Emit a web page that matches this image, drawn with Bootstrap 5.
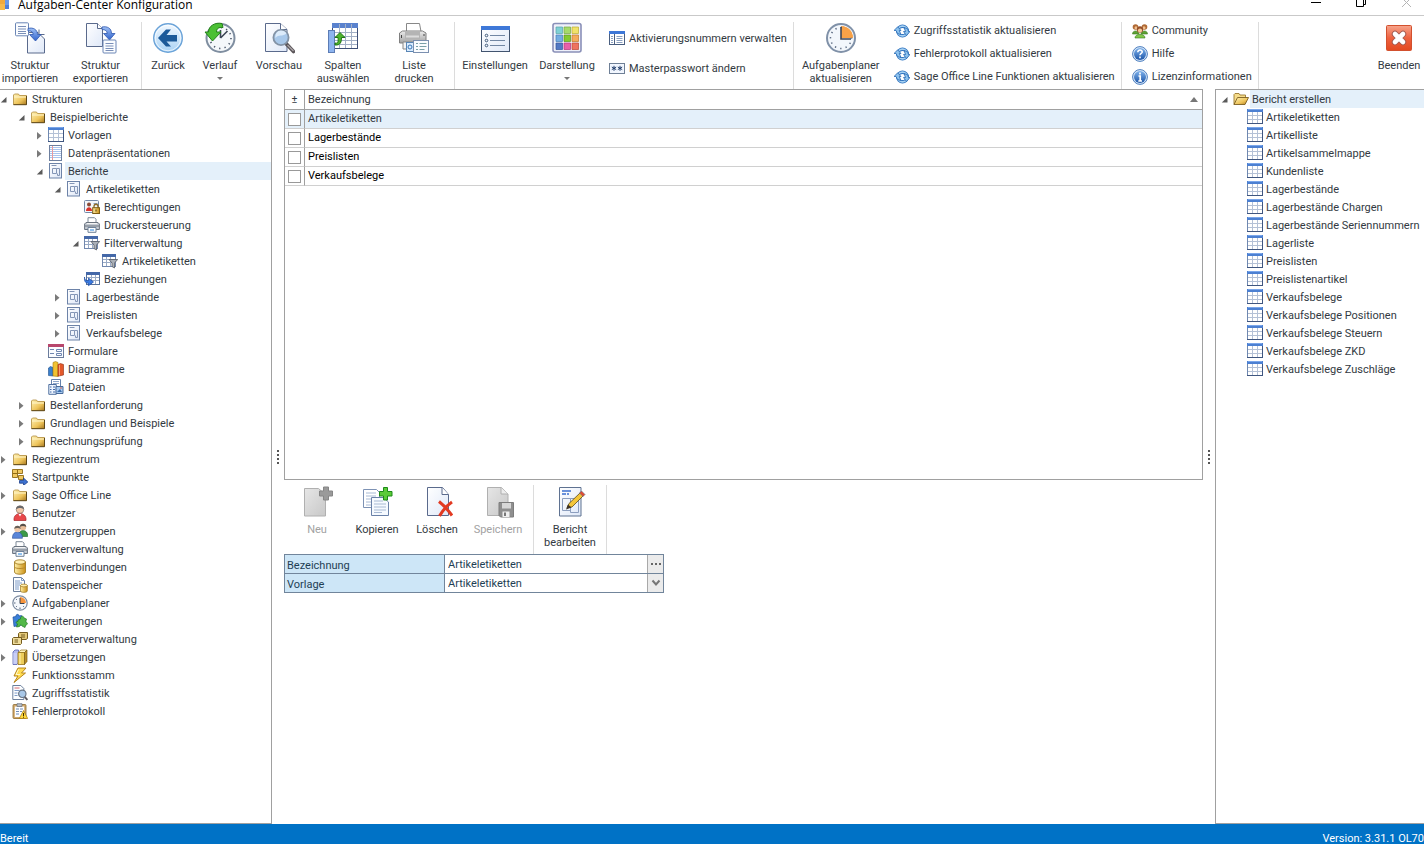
<!DOCTYPE html>
<html lang="de">
<head>
<meta charset="utf-8">
<meta name="viewport" content="width=device-width, initial-scale=1">
<title>Aufgaben-Center Konfiguration</title>
<link href="https://cdn.jsdelivr.net/npm/bootstrap@5.3.0/dist/css/bootstrap.min.css" rel="stylesheet">
<style>
body{font-family:Roboto,"DejaVu Sans Condensed",sans-serif;font-size:11px;line-height:13px;color:#333a42;background:#fff}
svg{display:block;flex:none}
button,input,select{font:inherit;color:inherit}
a{color:inherit;text-decoration:none}
.titlebar{height:16px;border-bottom:1px solid #c9c9c9;font-family:"Open Sans",sans-serif;font-size:12px;line-height:9px;color:#000}
.titlebar h1{font:inherit}
.winbtn{width:46px;height:15px;padding:0;border:0;background:none}
.ribbon{height:73px}
.rgroup{border-right:1px solid #dcdcdc;margin-top:6px}
.bigbtn{border:0;background:none;padding:0;display:flex;flex-direction:column;align-items:center;text-align:center;width:60px}
.bigbtn svg{margin-bottom:5px}
.bigbtn:disabled{color:#a2a2a2}
.b50{width:50px}.b52{width:52px}.b62{width:62px}.b64{width:64px}.b66{width:66px}.b80{width:80px}.b81{width:81px}.b94{width:94px}
.caret{width:0;height:0;border:3px solid transparent;border-top-color:#777;margin-top:5px;border-bottom:0}
.smallbtn{border:0;background:none;padding:0;display:flex;align-items:center;gap:4px;height:23px;text-align:left;white-space:nowrap}
.pair .smallbtn{height:30px}
.trio{margin-top:-3px;padding:0 6px}
.pair{margin-top:1px;padding:0 6px 0 10px}
.trio.wide{padding-left:10px}
.line{border:1px solid #a0a0a0}
.leftpane{width:272px;border-left:0}
.rightpane{width:209px;border-right:0;padding-left:5px}
.tree,.tree ul{list-style:none;margin:0;padding:0}
.tree ul{padding-left:18px}
.rightpane .tree ul{padding-left:14px}
.rightpane .node a{padding-left:2px}
.node{display:flex;align-items:center;height:18px;white-space:nowrap}
.tw{width:12px;height:18px;padding:0;border:0;background:none;flex:none}
.node a{flex:1;line-height:17px;padding:1px 0 0 3px;margin-left:1px}
.node.sel a{background:#e4f0fa}
.splitter{width:12px;gap:2px}
.splitter i{width:2px;height:2px;background:#555}
.work{display:grid;grid-template-rows:391fr 344fr}
.grid{width:100%;color:#000;border-collapse:separate;border-spacing:0}
.grid th,.grid td{font-weight:400;padding:0 3px;height:19px;line-height:18px;border-bottom:1px solid #d0d0d0}
.grid thead th{height:20px;border-color:#a0a0a0;color:#333a42}
.grid th:first-child,.grid td:first-child{width:20px;border-right:1px solid #a0a0a0;text-align:center}
.grid tr.sel td{background:#e4f0fa;color:#333a42}
.grid input{appearance:none;width:13px;height:13px;border:1px solid #999;background:#fff;display:block;margin:0}
.tools{padding:5px 0 0 3px}
.tools .tgroup{height:69px;border-right:1px solid #dcdcdc}
.tools .bigbtn{padding-top:1px}
.props{width:380px;border:1px solid #71859b;color:#1f3f55}
.prow{height:18px}
.prow + .prow{height:19px;border-top:1px solid #71859b}
.prow label{width:160px;background:#cde6f7;border-right:1px solid #71859b;padding:2px 2px 0;line-height:17px}
.prow input,.prow select{appearance:none;border:0;padding:0 3px;background:#fff;flex:1;min-width:0;outline:0}
.prow .pbtn{width:16px;border:0;border-left:1px solid #a9a9a9;background:#ebebeb;padding:0;display:flex;align-items:center;justify-content:center}
.status{height:20px;background:#0072c6;color:#fff;line-height:11px}
</style>
</head>
<body class="vh-100 d-flex flex-column overflow-hidden">

<svg width="0" height="0" class="position-absolute" aria-hidden="true">
<defs>
<linearGradient id="gPage" x1="0" y1="0" x2="1" y2="1"><stop offset="0" stop-color="#fff"/><stop offset="1" stop-color="#dfe8f8"/></linearGradient>
<linearGradient id="gGray" x1="0" y1="0" x2="1" y2="1"><stop offset="0" stop-color="#e6e6e6"/><stop offset="1" stop-color="#c8c8c8"/></linearGradient>
<linearGradient id="gFold" x1="0" y1="0" x2="1" y2="1"><stop offset="0" stop-color="#fff3b8"/><stop offset=".6" stop-color="#eec45a"/><stop offset="1" stop-color="#a87820"/></linearGradient>
<linearGradient id="gBlue" x1="0" y1="0" x2="0" y2="1"><stop offset="0" stop-color="#f3f9ff"/><stop offset="1" stop-color="#a8d2f5"/></linearGradient>
<linearGradient id="gBall" x1="0" y1="0" x2="0" y2="1"><stop offset="0" stop-color="#7fb2ec"/><stop offset="1" stop-color="#1c55a8"/></linearGradient>
<linearGradient id="gRed" x1="0" y1="0" x2="0" y2="1"><stop offset="0" stop-color="#f7a58c"/><stop offset=".5" stop-color="#ee6240"/><stop offset="1" stop-color="#e34a20"/></linearGradient>
<linearGradient id="gArr" x1="0" y1="0" x2="0" y2="1"><stop offset="0" stop-color="#9fc0f5"/><stop offset="1" stop-color="#2f62cc"/></linearGradient>
<linearGradient id="gGold" x1="0" y1="0" x2="1" y2="0"><stop offset="0" stop-color="#fff0a8"/><stop offset="1" stop-color="#c98f16"/></linearGradient>
<linearGradient id="gMetal" x1="0" y1="0" x2="0" y2="1"><stop offset="0" stop-color="#ececec"/><stop offset="1" stop-color="#a2a2a2"/></linearGradient>

<symbol id="open" viewBox="0 0 12 18"><path d="M6.500 7v5.500H.8z" fill="#5a5a5a"/></symbol>
<symbol id="shut" viewBox="0 0 12 18"><path d="M1 6l4.500 3.700L1 13.400z" fill="#7a7a7a"/></symbol>

<symbol id="import" viewBox="0 0 32 32"><path d="M13.500 10.500H24l6.500 6.500v14h-17z" fill="url(#gPage)" stroke="#5a6a8c"/><path d="M25 7.500v5h5.500" fill="#fff" stroke="#5a6a8c"/><rect x="1.500" y=".8" width="13" height="13" rx="1" fill="#fbfdff" stroke="#6a85b5"/><path d="M4 4.500h8M4 7h8M4 9.500h8M4 11.500h8" stroke="#7a8fb8"/><path d="M14 6.500c5-1.500 9.500 1 9.500 6H27l-5.500 6.500-6-6.500h3.700c0-2.500-2-4-5.200-3.500z" fill="url(#gArr)" stroke="#2c55ae" stroke-width=".8"/></symbol>
<symbol id="export" viewBox="0 0 32 32"><path d="M1.500 1.500h11l5 5v18h-16z" fill="url(#gPage)" stroke="#5a6a8c"/><path d="M12.500 1.500v5h5" fill="#fff" stroke="#5a6a8c"/><path d="M17 5c5-1 9.500 1 9.500 6.500H30L24.500 18l-6-6.500h3.700c0-2.500-2-4-5.200-4z" fill="url(#gArr)" stroke="#2c55ae" stroke-width=".8"/><rect x="18" y="18" width="13" height="13" rx="1" fill="#fbfdff" stroke="#6a85b5"/><path d="M20.500 21.500h8M20.500 24h8M20.500 26.500h8M20.500 28.500h8" stroke="#7a8fb8"/></symbol>
<symbol id="back" viewBox="0 0 32 32"><circle cx="16" cy="16" r="14.300" fill="url(#gBlue)" stroke="#6ba3d8" stroke-width="1.400"/><circle cx="16" cy="16" r="12.800" fill="none" stroke="#fff" opacity=".7"/><path d="M6 16l8-8.500h5L14.500 13H25v6.500H14.500L19 24.500h-5z" fill="#1c5a99"/></symbol>
<symbol id="history" viewBox="0 0 32 32"><circle cx="16.500" cy="16" r="14" fill="#f5f8fb" stroke="#7f8ea0" stroke-width="2"/><circle cx="16.500" cy="16" r="10.500" fill="none" stroke="#4a5668" stroke-width="1.600" stroke-dasharray="1.300 4.198"/><path d="M16.500 16l7-7M16.500 16V8" stroke="#3c4656" stroke-width="1.600"/><path d="M18 1.500C11 0 4.500 4 4.500 10H1l7.500 9 8.500-9h-4.500C12.500 6.500 14.500 5 19 5.500z" fill="#4cc034" stroke="#23801a"/></symbol>
<symbol id="preview" viewBox="0 0 32 32"><path d="M2.500 1.500h15l6.500 6v22h-21.500z" fill="url(#gPage)" stroke="#5a6a8c"/><path d="M17.500 1.500v6H24" fill="#fff" stroke="#5a6a8c"/><path d="M23.500 22l7 7.500" stroke="#5a5458" stroke-width="3.600" stroke-linecap="round"/><path d="M24.500 23l6 6" stroke="#aaa5a8" stroke-width="1.300"/><circle cx="18" cy="15.500" r="7.600" fill="#a8c8ea" stroke="#8292a5" stroke-width="1.800"/><path d="M12.500 16c3-4 7-1 11-4.500-1-2-3-3-5.500-3-4 0-6 3.500-5.500 7.500z" fill="#dcebfa"/></symbol>
<symbol id="columns" viewBox="0 0 32 32"><rect x="5.500" y="1.500" width="25" height="25" fill="#fff" stroke="#3f4f76"/><path d="M5 1h26v5H5z" fill="#5a82ce"/><path d="M6 10.500h24M6 14.500h24M6 18.500h24M6 22.500h24M12.500 2v24M18.500 2v24M24.500 2v24" stroke="#a3b0c6"/><rect x="1.500" y="8.500" width="6" height="22" fill="#8db4ef" stroke="#5c7cb5"/><path d="M8 21c4 1 3-3 3-5.500H8l5-5 5 5h-3.500c0 4.500-1 8-6.500 7.500z" fill="#4db32c" stroke="#217515"/></symbol>
<symbol id="printlist" viewBox="0 0 32 32"><path d="M8.500 9.500V1.500h13l1.500 8" fill="#fff" stroke="#888"/><path d="M1.500 11l3-2h20l3.500 2v10H1.500z" fill="url(#gMetal)" stroke="#808080"/><path d="M7 9.500h15v8H7z" fill="#b4b4b4"/><path d="M8 14.500h13" stroke="#dcdcdc" stroke-width="2"/><path d="M3.500 13v3M26 12v2" stroke="#444"/><path d="M5 20h10v7H5z" fill="#f4f4f4" stroke="#888"/><rect x="8.500" y="20.500" width="8" height="9" fill="#d8ebff" stroke="#5a86b5"/><circle cx="12" cy="25" r="2" fill="none" stroke="#3a76b5"/><rect x="15.500" y="18.500" width="15" height="12" fill="#fafcff" stroke="#7b90b0"/><path d="M18 21.500h2M18 24.500h2M18 27.500h2M21.500 21.500h7M21.500 24.500h7M21.500 27.500h5" stroke="#7aa0a8"/></symbol>
<symbol id="settings" viewBox="0 0 32 32"><rect x="2.500" y="4.500" width="28" height="25" fill="url(#gPage)" stroke="#42546f"/><path d="M2 4h29v4H2z" fill="#3e78d8"/><g fill="none" stroke="#3e5878"><circle cx="7.500" cy="13.500" r="1.300"/><circle cx="7.500" cy="18.500" r="1.300"/><circle cx="7.500" cy="23.500" r="1.300"/><path d="M11 13.500h15M11 18.500h15M11 23.500h15" stroke="#7186a3"/></g></symbol>
<symbol id="theme" viewBox="0 0 32 32"><rect x="2" y="1.500" width="28" height="28.500" rx="2" fill="#eef0fa" stroke="#8a90b8" stroke-width="1.600"/><g stroke-width=".7"><path d="M5 5h6.500v6.500H5z" fill="#7fd0d4" stroke="#58a5a9"/><path d="M13 5h6.500v6.500H13z" fill="#a6da6a" stroke="#77a93e"/><path d="M21 5h6.500v6.500H21z" fill="#f0e26a" stroke="#bdae2e"/><path d="M5 13h6.500v6.500H5z" fill="#74ace2" stroke="#4680b8"/><path d="M13 13h6.500v6.500H13z" fill="#84ca30" stroke="#5c9418"/><path d="M21 13h6.500v6.500H21z" fill="#f4ac5c" stroke="#c07828"/><path d="M5 21h6.500v6.500H5z" fill="#5278c4" stroke="#34549a"/><path d="M13 21h6.500v6.500H13z" fill="#e860a8" stroke="#b83478"/><path d="M21 21h6.500v6.500H21z" fill="#ee7460" stroke="#bc4834"/></g></symbol>
<symbol id="clockbig" viewBox="0 0 32 32"><circle cx="16" cy="16" r="14" fill="#f3f7fc" stroke="#8091a8" stroke-width="2"/><path d="M16 16V4A12 12 0 0 1 28 16z" fill="#f8a248"/><circle cx="16" cy="16" r="10.500" fill="none" stroke="#53627a" stroke-width="1.500" stroke-dasharray="1.300 4.198" stroke-dashoffset=".6"/><path d="M18 14V4.200A12 12 0 0 1 27.800 14z" fill="#f8a248"/><path d="M16 5v12h10" fill="none" stroke="#3e4757" stroke-width="1.600"/></symbol>
<symbol id="exit" viewBox="0 0 32 32"><rect x="3.500" y="3.500" width="25" height="25" rx="1" fill="url(#gRed)" stroke="#d2502e"/><path d="M12 12l8 8M20 12l-8 8" stroke="#a05a50" stroke-width="6.400" stroke-linecap="round"/><path d="M12 12l8 8M20 12l-8 8" stroke="#fff" stroke-width="4.600" stroke-linecap="round"/></symbol>

<symbol id="activation" viewBox="0 0 16 16"><rect x=".5" y="1.500" width="15" height="13" fill="#fff" stroke="#4a5f80"/><path d="M0 1h16v3H0z" fill="#3e78d8"/><path d="M5.500 4v10" stroke="#4a5f80"/><path d="M2 6.500h2M2 8.500h2M2 10.500h2M2 12.500h2M7.500 6.500h6M7.500 8.500h6M7.500 10.500h6M7.500 12.500h6" stroke="#8ba0c0"/></symbol>
<symbol id="password" viewBox="0 0 16 16"><rect x=".5" y="3.500" width="15" height="10" fill="#f2f7ff" stroke="#6e7f96"/><path d="M5 5.800v5M2.800 7l4.400 2.600M7.200 7L2.800 9.600M11 5.800v5M8.800 7l4.400 2.600M13.200 7L8.800 9.600" stroke="#24406e"/></symbol>
<symbol id="refresh" viewBox="0 0 16 16"><circle cx="8.500" cy="8" r="4.800" fill="none" stroke="#2f74c0" stroke-width="3.400"/><circle cx="8.500" cy="8" r="4.800" fill="none" stroke="#a5d0f2" stroke-width="1.700"/><path d="M0 7.500L3.700 3.800 7 7.500H5.300L7 11.500 3.500 10.500 2 7.500zM16 8.500l-3.500 4L9.500 8.500h2L10 4.500l3.500 1.200 1 2.800z" fill="#8cc2ee" stroke="#2a6ab4" stroke-width=".8"/></symbol>
<symbol id="community" viewBox="0 0 16 16"><path d="M.5 11c0-4 6-4 6.500 0zM9 11c.5-4 6.500-4 6.500 0z" fill="#5da233" stroke="#3c7a1f" stroke-width=".6"/><circle cx="3.500" cy="4" r="2.800" fill="#b06a35"/><circle cx="12.500" cy="4" r="2.800" fill="#b06a35"/><circle cx="4" cy="4.800" r="1.500" fill="#f2c08c"/><circle cx="12" cy="4.800" r="1.500" fill="#f2c08c"/><path d="M3 15c0-5 10-5 10 0z" fill="#7fc749" stroke="#3c7a1f" stroke-width=".6"/><circle cx="8" cy="6.500" r="3.200" fill="#96502a"/><circle cx="8" cy="7.500" r="2.100" fill="#f5c896"/></symbol>
<symbol id="help" viewBox="0 0 16 16"><circle cx="8" cy="8" r="7.400" fill="#dbe9f8" stroke="#3a70b8" stroke-width=".9"/><circle cx="8" cy="8" r="6" fill="url(#gBall)"/><path d="M5.800 6.200c0-3 4.600-2.700 4.400-.2C10.100 7.500 8 7.500 8 9.300M8 10.600v1.700" fill="none" stroke="#fff" stroke-width="1.600"/></symbol>
<symbol id="info" viewBox="0 0 16 16"><circle cx="8" cy="8" r="7.400" fill="#dbe9f8" stroke="#3a70b8" stroke-width=".9"/><circle cx="8" cy="8" r="6" fill="url(#gBall)"/><path d="M6.500 7h1.700v4.800M6.300 12h3.700M8 3.500v2" fill="none" stroke="#fff" stroke-width="1.700"/></symbol>

<symbol id="folder" viewBox="0 0 16 16"><path d="M1.500 13.500V4l1-1h4l1 1.500h7v9z" fill="url(#gFold)" stroke="#b08c3c" stroke-width=".8"/><path d="M2 6h12" stroke="#fff6cc"/><path d="M1.500 13.700h13V5" fill="none" stroke="#5d4718"/></symbol>
<symbol id="folderopen" viewBox="0 0 16 16"><path d="M1 13.500V3.500l1-1h4L7 4h5.500v3" fill="#f6dc8a" stroke="#9a7830" stroke-width=".9"/><path d="M1 13.500l3.500-7h11L12 13.500z" fill="url(#gFold)" stroke="#7d5f20" stroke-width=".9"/></symbol>
<symbol id="table" viewBox="0 0 16 16"><rect x=".5" y=".5" width="15" height="14" fill="#fff" stroke="#6f88b0"/><path d="M0 0h16v3H0z" fill="#4c80d2"/><path d="M1 .5h14" stroke="#7aa6ea"/><path d="M1 6.500h14M1 10.500h14M5.500 3v11M10.500 3v11" stroke="#b4c1d6"/><path d="M0 14.500h16M15.500 3v11" stroke="#3f5680"/></symbol>
<symbol id="list" viewBox="0 0 16 16"><rect x="1.500" y=".5" width="12" height="15" fill="#fff" stroke="#6d7f9f"/><path d="M2 2.500h11M2 4.500h11M2 6.500h11M2 8.500h11M2 10.500h11M2 12.500h11" stroke="#a9c4ee"/><path d="M4.500 1v14" stroke="#e8999e"/></symbol>
<symbol id="report" viewBox="0 0 16 16"><rect x="1.500" y=".5" width="12" height="14.500" fill="url(#gPage)" stroke="#6d83a8"/><path d="M3.500 2.500h5M4.500 5.500h4v5h-4zM8.500 5.500h3v7h-2v-2" fill="none" stroke="#8496b6"/></symbol>
<symbol id="rights" viewBox="0 0 16 16"><rect x=".5" y="1.500" width="14" height="12" rx="1" fill="#f4f7fb" stroke="#7488a8"/><circle cx="5" cy="5.500" r="2" fill="#8a4a38"/><path d="M2 12c0-5 6-5 6 0z" fill="#d8332c"/><path d="M9.500 4.500h4" stroke="#8aa0c0"/><path d="M10 9V7.500c0-3 4-3 4 0V9" fill="none" stroke="#8c6c28" stroke-width="1.300"/><rect x="8.700" y="8.700" width="6.800" height="5.800" fill="url(#gGold)" stroke="#7d5c14"/><path d="M12 10.500v2" stroke="#4d3808"/></symbol>
<symbol id="printer" viewBox="0 0 16 16"><path d="M4 6V.7h6.500L12 2.200V6" fill="#fff" stroke="#7d8896"/><path d="M.6 7L2 5.500h12L15.400 7v5.500H.6z" fill="#c4cad2" stroke="#6b7480"/><path d="M1 9h14" stroke="#6b7480"/><path d="M3 6.500h10" stroke="#f4f4f4"/><path d="M4 10.500h8v4.800H4z" fill="#fafdff" stroke="#6f8198"/><path d="M6 12h4v2H6z" fill="#8fc0ee"/></symbol>
<symbol id="filter" viewBox="0 0 16 16"><rect x=".5" y="1.500" width="13" height="12" fill="#fff" stroke="#7288ae"/><path d="M0 1h14v3H0z" fill="#4468a8"/><path d="M1 6.500h12M1 9.500h12M4.500 4v9M8.500 4v9" stroke="#9aabc6"/><path d="M7 6.500h8.700L12.500 10v5L10 13.500V10z" fill="#aab0b8" stroke="#555c66" stroke-width=".8"/></symbol>
<symbol id="relation" viewBox="0 0 16 16"><rect x="2.500" y="1.500" width="13" height="12" fill="#fff" stroke="#56719c"/><path d="M2 1h14v3H2z" fill="#4468a8"/><path d="M3 6.500h12M3 9.500h12M7.500 4v9M11.500 4v9" stroke="#9aabc6"/><path d="M.5 6c0 3 1.500 4 4 3.500V7l5 4-5 3.700v-2.500C1.500 12.500 0 10 .5 6z" fill="#3a7ae0" stroke="#1d4ba0" stroke-width=".7"/></symbol>
<symbol id="form" viewBox="0 0 16 16"><rect x=".5" y="1.500" width="15" height="13" fill="#fbfcff" stroke="#6b7c9c"/><path d="M0 1h16v3H0z" fill="#b8476c"/><path d="M2 6.500h4M2 10.500h4M8.500 6.500h5v2h-5zM8.500 10.500h5v2h-5z" fill="none" stroke="#6f86b0"/></symbol>
<symbol id="chart" viewBox="0 0 16 16"><path d="M.5 7l2-1.500L5 6.500V15l-4.500-.5z" fill="#3a80cc" stroke="#1e4f8c" stroke-width=".6"/><path d="M5 1.500L7.500.5l2.500 1v14l-5-.5z" fill="#f1c232" stroke="#a57c10" stroke-width=".6"/><path d="M10 3.500l2.500-1 3 1V14l-5.500 1.200z" fill="#e4582a" stroke="#8f2c10" stroke-width=".6"/><path d="M11.500 4v10.500" stroke="#f8a070"/></symbol>
<symbol id="files" viewBox="0 0 16 16"><path d="M3.500.5h9v11h-9z" fill="#fff" stroke="#6682ac"/><path d="M5 2.500h6M5 4.500h6" stroke="#8fa8cc"/><path d="M.8 5.500h7.500v9.800H.8z" fill="#eef5ff" stroke="#4e6e9e"/><path d="M2 8h1.500M5 8h2M2 10.500h1.500M5 10.500h2M2 13h1.500M5 13h2" stroke="#3f68a8" stroke-width="1.200"/><path d="M8 7.500h7v7H8z" fill="#a9cbf0" stroke="#486a9a"/><path d="M9 13l3-3 2 3z" fill="#3e6fae"/><path d="M12 9h2" stroke="#d8604a"/></symbol>
<symbol id="start" viewBox="0 0 16 16"><path d="M.5.5h5v4h-5zM5.500.5h5v4h-5zM.5 4.500h5v4h-5zM6.500 6.500h5v4h-5z" fill="#f0c860" stroke="#8f6a14" stroke-width=".9"/><path d="M7.500 11.500h4V9l4.300 4-4.300 3.500v-2.300h-4z" fill="#3e72d0" stroke="#1c3f8a" stroke-width=".8"/></symbol>
<symbol id="user" viewBox="0 0 16 16"><path d="M2 15.500c-.5-5 3-7 6-7s6.500 2 6 7z" fill="#e8474a" stroke="#a82428" stroke-width=".7"/><circle cx="8" cy="4.500" r="3.800" fill="#f0c8a8" stroke="#7a6458" stroke-width=".6"/><path d="M4 4.500C3.500-.5 12.500-.5 12 4.500 10 2.500 6 2.500 4 4.500z" fill="#66686c"/><path d="M6.500 9L8 11.500 9.500 9z" fill="#fff"/></symbol>
<symbol id="users" viewBox="0 0 16 16"><path d="M6.500 13.500c0-4 2-6 4.500-6s5 2 4.700 6z" fill="#3c9a48" stroke="#1e6428" stroke-width=".6"/><circle cx="11" cy="4" r="3.200" fill="#e8bd98"/><path d="M7.800 4C7.500-.5 14.500-.5 14.200 4c-2-1.500-4.500-1.500-6.400 0z" fill="#55504c"/><path d="M.4 15.300c0-4.500 2.200-6.300 5-6.300s5.200 2 5 6.300z" fill="#5b86d8" stroke="#2c4f96" stroke-width=".6"/><circle cx="5.500" cy="6" r="3.200" fill="#f0c8a8"/><path d="M2.300 6c-.3-4.500 6.700-4.500 6.400 0-2-1.500-4.500-1.500-6.400 0z" fill="#66605a"/></symbol>
<symbol id="db" viewBox="0 0 16 16"><path d="M2.500 3v10c0 3 11 3 11 0V3z" fill="url(#gGold)" stroke="#9c7418" stroke-width=".8"/><ellipse cx="8" cy="3" rx="5.500" ry="2.200" fill="#ffeeb0" stroke="#9c7418" stroke-width=".8"/><path d="M2.500 8c1 2 10 2 11 0" fill="none" stroke="#b8892a"/></symbol>
<symbol id="storage" viewBox="0 0 16 16"><path d="M1.500.5h8l3 3v11h-11z" fill="#fbfdff" stroke="#6c7f9c"/><path d="M9.500.5v3h3M3 4h5M3 6h7M3 8h5M3 10h4M3 12h4" fill="none" stroke="#7f9cc8"/><path d="M8.500 8.500v5.500c0 1.800 6.800 1.800 6.800 0V8.500z" fill="url(#gGold)" stroke="#9c7418" stroke-width=".7"/><ellipse cx="11.900" cy="8.500" rx="3.400" ry="1.400" fill="#ffeeb0" stroke="#9c7418" stroke-width=".7"/></symbol>
<symbol id="clock" viewBox="0 0 16 16"><circle cx="8" cy="8" r="7.200" fill="#f5f8fc" stroke="#7c8ba0" stroke-width="1.200"/><path d="M8 8V2a6 6 0 0 1 6 6z" fill="#f6943c"/><path d="M8 3v5.500h4.500" fill="none" stroke="#3a4454"/><path d="M2 8h1.500M8 12.500V14M4 4l.8.8M4 12l.8-.8M12 12l-.8-.8" stroke="#53627a"/></symbol>
<symbol id="puzzle" viewBox="0 0 16 16"><path d="M1 4l3-.5C3.500 1 7 .5 7 3l2.500-.5V12L2 13.500z" fill="#3a80d8" stroke="#1e4f9c" stroke-width=".7"/><path d="M6 7l2.500-1c-.5-3 3-4 3.500-1l2.500 1-.8 3c2.500.5 2 3 0 3l-.7 2.500L10 13c-.5-1.500-2-1.500-2.500.5L4.500 14l1-3C3.500 10 4 8 6 8.500z" fill="#52b848" stroke="#207a24" stroke-width=".7"/></symbol>
<symbol id="params" viewBox="0 0 16 16"><path d="M6.500 2.500l1-1h8v6l-1.500 1H6.500z" fill="#e3c878" stroke="#755c20"/><path d="M.5 7.500l1-1h8v6l-1 1h-8z" fill="#efdc9a" stroke="#755c20"/><path d="M2.500 9h3.500M2.500 11h3.500M9 4h4M9 6h4" stroke="#755c20"/></symbol>
<symbol id="books" viewBox="0 0 16 16"><path d="M1 3l2-2h3.500v12.500l-1.500 2H1z" fill="#b5bdf2" stroke="#5660b0" stroke-width=".8"/><path d="M2 4v11M4 4v11" stroke="#e6e8ff" stroke-width=".8"/><path d="M6 3.500L9 1h6l-2.500 2.500z" fill="#fff4bc" stroke="#97741c" stroke-width=".7"/><path d="M6 3.500h6.500v12H6z" fill="#edcd5a" stroke="#97741c" stroke-width=".8"/><path d="M12.500 3.500L15 1v11.500l-2.500 3z" fill="#b88e28" stroke="#7d5e14" stroke-width=".7"/><path d="M8 4v11" stroke="#fff1b0"/></symbol>
<symbol id="bolt" viewBox="0 0 16 16"><path d="M6 1h8L9.500 6h4L2 15.500 6 9H2z" fill="#ffdc52" stroke="#b07a10" stroke-width=".9"/><path d="M6.500 2.500L4 7.500h4" fill="none" stroke="#fff8c8"/></symbol>
<symbol id="stats" viewBox="0 0 16 16"><path d="M.8.500h8l3 3v11h-11z" fill="#fbfdff" stroke="#6c7f9c"/><path d="M2.500 3h5" stroke="#d86a70"/><path d="M2.500 5.500h5M2.500 8h3M2.500 10.500h3" stroke="#7f9cc8"/><path d="M12.500 11.500l2.800 3.500" stroke="#5e5a60" stroke-width="2"/><circle cx="10.300" cy="8.800" r="3.700" fill="#a9c8e8" stroke="#6a7686" stroke-width="1.200"/></symbol>
<symbol id="errlog" viewBox="0 0 16 16"><rect x="1" y="1.500" width="13" height="14" rx="1" fill="#d0a86a" stroke="#8d6a30" stroke-width=".8"/><path d="M2.800 3.500h9.400v10.500H2.800z" fill="#fcfdff"/><path d="M5 .7h5v2.800H5z" fill="#b8bfc8" stroke="#666f7c" stroke-width=".7"/><path d="M4 6h3M8 6h3M4 8.500h3M8 8.500h2M4 11h3" stroke="#6f8cb8"/><path d="M11.500 7.500l4.200 8H7.300z" fill="#ffd83c" stroke="#a57808" stroke-width=".7"/><path d="M11.500 10v3M11.500 13.700v1" stroke="#3c2c00"/></symbol>

<symbol id="new" viewBox="0 0 32 32"><path d="M3.500 2.500h14l7 6v21.500h-21z" fill="url(#gGray)" stroke="#b0b0b0"/><path d="M22.500 1h5v4h4v5h-4v4h-5v-4h-4V5h4z" fill="#9a9a9a" stroke="#868686"/></symbol>
<symbol id="copy" viewBox="0 0 32 32"><path d="M2.500 3.500h13l3 3v15h-16z" fill="#fff" stroke="#7d92b4"/><path d="M5 7h10M5 10h10M5 13h6M5 16h6M5 19h6" stroke="#a8bad4"/><path d="M10.500 11.500h12l5 4.500v13.500h-17z" fill="#f6faff" stroke="#6a81a8"/><path d="M13 15h9M13 18h12M13 21h12M13 24h12M13 26.500h8" stroke="#a8bad4"/><path d="M22.500 1.500h4v4h4.500v4.500h-4.500v4h-4v-4h-4V5.500h4z" fill="#5ccb38" stroke="#1d8a18"/></symbol>
<symbol id="delete" viewBox="0 0 32 32"><path d="M6.500 1.500h15l6 7v21h-21z" fill="url(#gPage)" stroke="#5a6a8c"/><path d="M21 1.500v7h6.500" fill="#fff" stroke="#5a6a8c"/><path d="M18 15.500c5 4 9 8.500 13 14M31 16C26.500 19 22 24 18.500 30" fill="none" stroke="#e23a22" stroke-width="3"/></symbol>
<symbol id="save" viewBox="0 0 32 32"><path d="M5.500 1.500h14l6.500 6.500v21.500H5.500z" fill="url(#gGray)" stroke="#b0b0b0"/><path d="M19 1.500V8h7" fill="#ededed" stroke="#b0b0b0"/><path d="M17 16.500h14.500V31H18.500L17 29.500z" fill="#8f8f8f" stroke="#7d7d7d"/><path d="M20 17h9v5.500h-9z" fill="#d8d8d8"/><path d="M20.500 25.500h7V31h-7z" fill="#efefef"/><path d="M22 26.500h2V30h-2z" fill="#777"/></symbol>
<symbol id="edit" viewBox="0 0 32 32"><path d="M5.500 1.500h21.500V30H5.500z" fill="url(#gPage)" stroke="#5f7291"/><path d="M8 5h9M8 8h4M13 8h2" stroke="#3d70d0" stroke-width="1.300"/><path d="M8.500 12.500h8v12h-8zM16.500 12.500h8v14h-8z" fill="none" stroke="#8c9ebe"/><path d="M13 21.500l2-4L26.500 6.500l3 3L18 21z" fill="#f4c63a" stroke="#5c4a1c" stroke-width=".8"/><path d="M12 23.500l2-5 3.500 3z" fill="#3f3426"/><path d="M25.500 7l2-2 3.500 3.500-2 2z" fill="#e24a32" stroke="#5f6f8a" stroke-width=".6"/></symbol>
</defs>
</svg>

<header class="titlebar d-flex flex-shrink-0">
  <svg width="10" height="10" viewBox="0 0 10 10"><path d="M0 0h5v4H0z" fill="#f2a93c"/><path d="M5 0h4v5H5z" fill="#6c9be8"/><path d="M0 4h5v6H0z" fill="#f6b94c"/><path d="M5 5h4v4H5z" fill="#4f7ed8"/></svg>
  <h1 class="m-0 ms-2">Aufgaben-Center Konfiguration</h1>
  <div class="d-flex ms-auto me-n1">
    <button class="winbtn" aria-label="Minimieren"><svg width="46" height="15"><path d="M25 2.500h10" stroke="#000"/></svg></button>
    <button class="winbtn" aria-label="Wiederherstellen"><svg width="46" height="15"><path d="M24.500 0v6.500h7V0M31.500 4.500h2V0" fill="none" stroke="#000"/></svg></button>
    <button class="winbtn" aria-label="Schließen"><svg width="46" height="15"><path d="M33.500-2.500l-9.500 9.500M23.500-2.500l9.500 9.500" stroke="#b5b5b5"/></svg></button>
  </div>
</header>

<nav class="ribbon d-flex flex-shrink-0" aria-label="Menüband">
  <div class="rgroup d-flex">
    <button class="bigbtn"><svg width="32" height="32"><use href="#import"/></svg>Struktur<br>importieren</button>
    <button class="bigbtn b81"><svg width="32" height="32"><use href="#export"/></svg>Struktur<br>exportieren</button>
  </div>
  <div class="rgroup d-flex">
    <button class="bigbtn b52"><svg width="32" height="32"><use href="#back"/></svg>Zurück</button>
    <button class="bigbtn b52"><svg width="32" height="32"><use href="#history"/></svg>Verlauf<span class="caret"></span></button>
    <button class="bigbtn b66"><svg width="32" height="32"><use href="#preview"/></svg>Vorschau</button>
    <button class="bigbtn b62"><svg width="32" height="32"><use href="#columns"/></svg>Spalten<br>auswählen</button>
    <button class="bigbtn b80"><svg width="32" height="32"><use href="#printlist"/></svg>Liste<br>drucken</button>
  </div>
  <div class="rgroup d-flex">
    <button class="bigbtn b80"><svg width="32" height="32"><use href="#settings"/></svg>Einstellungen</button>
    <button class="bigbtn b64"><svg width="32" height="32"><use href="#theme"/></svg>Darstellung<span class="caret"></span></button>
    <div class="pair">
      <button class="smallbtn"><svg width="16" height="16"><use href="#activation"/></svg>Aktivierungsnummern verwalten</button>
      <button class="smallbtn"><svg width="16" height="16"><use href="#password"/></svg>Masterpasswort ändern</button>
    </div>
  </div>
  <div class="rgroup d-flex">
    <button class="bigbtn b94"><svg width="32" height="32"><use href="#clockbig"/></svg>Aufgabenplaner<br>aktualisieren</button>
    <div class="trio">
      <button class="smallbtn"><svg width="16" height="16"><use href="#refresh"/></svg>Zugriffsstatistik aktualisieren</button>
      <button class="smallbtn"><svg width="16" height="16"><use href="#refresh"/></svg>Fehlerprotokoll aktualisieren</button>
      <button class="smallbtn"><svg width="16" height="16"><use href="#refresh"/></svg>Sage Office Line Funktionen aktualisieren</button>
    </div>
  </div>
  <div class="rgroup d-flex">
    <div class="trio wide">
      <button class="smallbtn"><svg width="16" height="16"><use href="#community"/></svg>Community</button>
      <button class="smallbtn"><svg width="16" height="16"><use href="#help"/></svg>Hilfe</button>
      <button class="smallbtn"><svg width="16" height="16"><use href="#info"/></svg>Lizenzinformationen</button>
    </div>
  </div>
  <div class="rgroup d-flex ms-auto border-0"><button class="bigbtn b50"><svg width="32" height="32"><use href="#exit"/></svg>Beenden</button></div>
</nav>

<main class="d-flex flex-grow-1 overflow-hidden">
  <aside class="leftpane line flex-shrink-0 overflow-hidden">
    <ul class="tree">
      <li><div class="node"><button class="tw" aria-label="Zuklappen"><svg width="12" height="18"><use href="#open"/></svg></button><svg width="16" height="16"><use href="#folder"/></svg><a href="#">Strukturen</a></div>
        <ul>
          <li><div class="node"><button class="tw" aria-label="Zuklappen"><svg width="12" height="18"><use href="#open"/></svg></button><svg width="16" height="16"><use href="#folder"/></svg><a href="#">Beispielberichte</a></div>
            <ul>
              <li><div class="node"><button class="tw" aria-label="Aufklappen"><svg width="12" height="18"><use href="#shut"/></svg></button><svg width="16" height="16"><use href="#table"/></svg><a href="#">Vorlagen</a></div></li>
              <li><div class="node"><button class="tw" aria-label="Aufklappen"><svg width="12" height="18"><use href="#shut"/></svg></button><svg width="16" height="16"><use href="#list"/></svg><a href="#">Datenpräsentationen</a></div></li>
              <li><div class="node sel"><button class="tw" aria-label="Zuklappen"><svg width="12" height="18"><use href="#open"/></svg></button><svg width="16" height="16"><use href="#report"/></svg><a href="#">Berichte</a></div>
                <ul>
                  <li><div class="node"><button class="tw" aria-label="Zuklappen"><svg width="12" height="18"><use href="#open"/></svg></button><svg width="16" height="16"><use href="#report"/></svg><a href="#">Artikeletiketten</a></div>
                    <ul>
                      <li><div class="node"><span class="tw"></span><svg width="16" height="16"><use href="#rights"/></svg><a href="#">Berechtigungen</a></div></li>
                      <li><div class="node"><span class="tw"></span><svg width="16" height="16"><use href="#printer"/></svg><a href="#">Druckersteuerung</a></div></li>
                      <li><div class="node"><button class="tw" aria-label="Zuklappen"><svg width="12" height="18"><use href="#open"/></svg></button><svg width="16" height="16"><use href="#filter"/></svg><a href="#">Filterverwaltung</a></div>
                        <ul>
                          <li><div class="node"><span class="tw"></span><svg width="16" height="16"><use href="#filter"/></svg><a href="#">Artikeletiketten</a></div></li>
                        </ul>
                      </li>
                      <li><div class="node"><span class="tw"></span><svg width="16" height="16"><use href="#relation"/></svg><a href="#">Beziehungen</a></div></li>
                    </ul>
                  </li>
                  <li><div class="node"><button class="tw" aria-label="Aufklappen"><svg width="12" height="18"><use href="#shut"/></svg></button><svg width="16" height="16"><use href="#report"/></svg><a href="#">Lagerbestände</a></div></li>
                  <li><div class="node"><button class="tw" aria-label="Aufklappen"><svg width="12" height="18"><use href="#shut"/></svg></button><svg width="16" height="16"><use href="#report"/></svg><a href="#">Preislisten</a></div></li>
                  <li><div class="node"><button class="tw" aria-label="Aufklappen"><svg width="12" height="18"><use href="#shut"/></svg></button><svg width="16" height="16"><use href="#report"/></svg><a href="#">Verkaufsbelege</a></div></li>
                </ul>
              </li>
              <li><div class="node"><span class="tw"></span><svg width="16" height="16"><use href="#form"/></svg><a href="#">Formulare</a></div></li>
              <li><div class="node"><span class="tw"></span><svg width="16" height="16"><use href="#chart"/></svg><a href="#">Diagramme</a></div></li>
              <li><div class="node"><span class="tw"></span><svg width="16" height="16"><use href="#files"/></svg><a href="#">Dateien</a></div></li>
            </ul>
          </li>
          <li><div class="node"><button class="tw" aria-label="Aufklappen"><svg width="12" height="18"><use href="#shut"/></svg></button><svg width="16" height="16"><use href="#folder"/></svg><a href="#">Bestellanforderung</a></div></li>
          <li><div class="node"><button class="tw" aria-label="Aufklappen"><svg width="12" height="18"><use href="#shut"/></svg></button><svg width="16" height="16"><use href="#folder"/></svg><a href="#">Grundlagen und Beispiele</a></div></li>
          <li><div class="node"><button class="tw" aria-label="Aufklappen"><svg width="12" height="18"><use href="#shut"/></svg></button><svg width="16" height="16"><use href="#folder"/></svg><a href="#">Rechnungsprüfung</a></div></li>
        </ul>
      </li>
      <li><div class="node"><button class="tw" aria-label="Aufklappen"><svg width="12" height="18"><use href="#shut"/></svg></button><svg width="16" height="16"><use href="#folder"/></svg><a href="#">Regiezentrum</a></div></li>
      <li><div class="node"><span class="tw"></span><svg width="16" height="16"><use href="#start"/></svg><a href="#">Startpunkte</a></div></li>
      <li><div class="node"><button class="tw" aria-label="Aufklappen"><svg width="12" height="18"><use href="#shut"/></svg></button><svg width="16" height="16"><use href="#folder"/></svg><a href="#">Sage Office Line</a></div></li>
      <li><div class="node"><span class="tw"></span><svg width="16" height="16"><use href="#user"/></svg><a href="#">Benutzer</a></div></li>
      <li><div class="node"><button class="tw" aria-label="Aufklappen"><svg width="12" height="18"><use href="#shut"/></svg></button><svg width="16" height="16"><use href="#users"/></svg><a href="#">Benutzergruppen</a></div></li>
      <li><div class="node"><span class="tw"></span><svg width="16" height="16"><use href="#printer"/></svg><a href="#">Druckerverwaltung</a></div></li>
      <li><div class="node"><span class="tw"></span><svg width="16" height="16"><use href="#db"/></svg><a href="#">Datenverbindungen</a></div></li>
      <li><div class="node"><span class="tw"></span><svg width="16" height="16"><use href="#storage"/></svg><a href="#">Datenspeicher</a></div></li>
      <li><div class="node"><button class="tw" aria-label="Aufklappen"><svg width="12" height="18"><use href="#shut"/></svg></button><svg width="16" height="16"><use href="#clock"/></svg><a href="#">Aufgabenplaner</a></div></li>
      <li><div class="node"><button class="tw" aria-label="Aufklappen"><svg width="12" height="18"><use href="#shut"/></svg></button><svg width="16" height="16"><use href="#puzzle"/></svg><a href="#">Erweiterungen</a></div></li>
      <li><div class="node"><span class="tw"></span><svg width="16" height="16"><use href="#params"/></svg><a href="#">Parameterverwaltung</a></div></li>
      <li><div class="node"><button class="tw" aria-label="Aufklappen"><svg width="12" height="18"><use href="#shut"/></svg></button><svg width="16" height="16"><use href="#books"/></svg><a href="#">Übersetzungen</a></div></li>
      <li><div class="node"><span class="tw"></span><svg width="16" height="16"><use href="#bolt"/></svg><a href="#">Funktionsstamm</a></div></li>
      <li><div class="node"><span class="tw"></span><svg width="16" height="16"><use href="#stats"/></svg><a href="#">Zugriffsstatistik</a></div></li>
      <li><div class="node"><span class="tw"></span><svg width="16" height="16"><use href="#errlog"/></svg><a href="#">Fehlerprotokoll</a></div></li>
    </ul>
  </aside>

  <div class="splitter d-flex flex-column align-items-center justify-content-center flex-shrink-0"><i></i><i></i><i></i><i></i></div>

  <section class="work flex-grow-1 overflow-hidden">
    <div class="line overflow-hidden">
      <table class="grid">
        <thead><tr><th scope="col">±</th><th scope="col"><div class="d-flex align-items-center justify-content-between">Bezeichnung<svg width="10" height="5"><path d="M1 5l4-5 4 5z" fill="#777"/></svg></div></th></tr></thead>
        <tbody>
          <tr class="sel"><td><input type="checkbox" aria-label="Artikeletiketten"></td><td>Artikeletiketten</td></tr>
          <tr><td><input type="checkbox" aria-label="Lagerbestände"></td><td>Lagerbestände</td></tr>
          <tr><td><input type="checkbox" aria-label="Preislisten"></td><td>Preislisten</td></tr>
          <tr><td><input type="checkbox" aria-label="Verkaufsbelege"></td><td>Verkaufsbelege</td></tr>
        </tbody>
      </table>
    </div>
    <div>
      <div class="tools d-flex">
        <div class="tgroup d-flex pe-1">
          <button class="bigbtn" disabled><svg width="32" height="32"><use href="#new"/></svg>Neu</button>
          <button class="bigbtn"><svg width="32" height="32"><use href="#copy"/></svg>Kopieren</button>
          <button class="bigbtn"><svg width="32" height="32"><use href="#delete"/></svg>Löschen</button>
          <button class="bigbtn b62" disabled><svg width="32" height="32"><use href="#save"/></svg>Speichern</button>
        </div>
        <div class="tgroup d-flex px-1">
          <button class="bigbtn b64"><svg width="32" height="32"><use href="#edit"/></svg>Bericht<br>bearbeiten</button>
        </div>
      </div>
      <form class="props">
        <div class="prow d-flex"><label for="bez">Bezeichnung</label><input id="bez" type="text" value="Artikeletiketten"><button type="button" class="pbtn" aria-label="Auswählen"><svg width="12" height="4"><path d="M1 1h2v2H1zM5 1h2v2H5zM9 1h2v2H9z" fill="#666"/></svg></button></div>
        <div class="prow d-flex"><label for="vor">Vorlage</label><select id="vor"><option>Artikeletiketten</option></select><button type="button" class="pbtn" aria-label="Aufklappen"><svg width="10" height="8"><path d="M1.500 1.500L5 5.500l3.500-4" fill="none" stroke="#777" stroke-width="2"/></svg></button></div>
      </form>
    </div>
  </section>

  <div class="splitter d-flex flex-column align-items-center justify-content-center flex-shrink-0"><i></i><i></i><i></i><i></i></div>

  <aside class="rightpane line flex-shrink-0 overflow-hidden">
    <ul class="tree">
      <li><div class="node sel"><button class="tw" aria-label="Zuklappen"><svg width="12" height="18"><use href="#open"/></svg></button><svg width="16" height="16"><use href="#folderopen"/></svg><a href="#">Bericht erstellen</a></div>
        <ul>
          <li><div class="node"><span class="tw"></span><svg width="16" height="16"><use href="#table"/></svg><a href="#">Artikeletiketten</a></div></li>
          <li><div class="node"><span class="tw"></span><svg width="16" height="16"><use href="#table"/></svg><a href="#">Artikelliste</a></div></li>
          <li><div class="node"><span class="tw"></span><svg width="16" height="16"><use href="#table"/></svg><a href="#">Artikelsammelmappe</a></div></li>
          <li><div class="node"><span class="tw"></span><svg width="16" height="16"><use href="#table"/></svg><a href="#">Kundenliste</a></div></li>
          <li><div class="node"><span class="tw"></span><svg width="16" height="16"><use href="#table"/></svg><a href="#">Lagerbestände</a></div></li>
          <li><div class="node"><span class="tw"></span><svg width="16" height="16"><use href="#table"/></svg><a href="#">Lagerbestände Chargen</a></div></li>
          <li><div class="node"><span class="tw"></span><svg width="16" height="16"><use href="#table"/></svg><a href="#">Lagerbestände Seriennummern</a></div></li>
          <li><div class="node"><span class="tw"></span><svg width="16" height="16"><use href="#table"/></svg><a href="#">Lagerliste</a></div></li>
          <li><div class="node"><span class="tw"></span><svg width="16" height="16"><use href="#table"/></svg><a href="#">Preislisten</a></div></li>
          <li><div class="node"><span class="tw"></span><svg width="16" height="16"><use href="#table"/></svg><a href="#">Preislistenartikel</a></div></li>
          <li><div class="node"><span class="tw"></span><svg width="16" height="16"><use href="#table"/></svg><a href="#">Verkaufsbelege</a></div></li>
          <li><div class="node"><span class="tw"></span><svg width="16" height="16"><use href="#table"/></svg><a href="#">Verkaufsbelege Positionen</a></div></li>
          <li><div class="node"><span class="tw"></span><svg width="16" height="16"><use href="#table"/></svg><a href="#">Verkaufsbelege Steuern</a></div></li>
          <li><div class="node"><span class="tw"></span><svg width="16" height="16"><use href="#table"/></svg><a href="#">Verkaufsbelege ZKD</a></div></li>
          <li><div class="node"><span class="tw"></span><svg width="16" height="16"><use href="#table"/></svg><a href="#">Verkaufsbelege Zuschläge</a></div></li>
        </ul>
      </li>
    </ul>
  </aside>
</main>

<footer class="status d-flex justify-content-between align-items-end flex-shrink-0"><span>Bereit</span><span>Version: 3.31.1 OL70</span></footer>

<script src="https://cdn.jsdelivr.net/npm/bootstrap@5.3.0/dist/js/bootstrap.bundle.min.js"></script>
</body>
</html>
